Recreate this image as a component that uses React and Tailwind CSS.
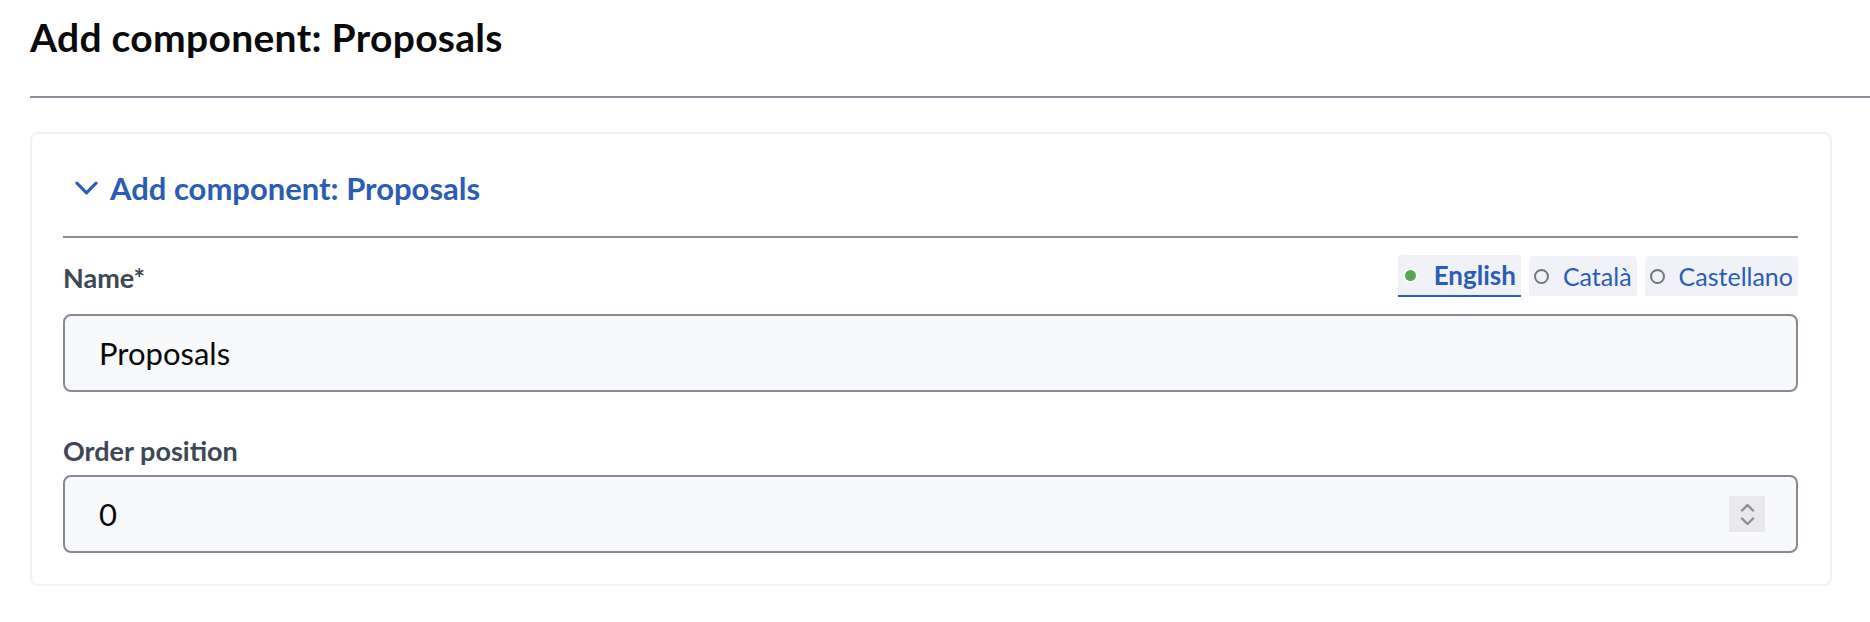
import React from "react";

function Chevron({ className }) {
  return (
    <svg className={className} viewBox="0 0 24 14" fill="none">
      <polyline points="2,2 12,12 22,2" stroke="currentColor" strokeWidth="3.2" strokeLinecap="round" strokeLinejoin="round" />
    </svg>
  );
}

function Tab({ label, active }) {
  return (
    <div
      className={
        "flex items-center pl-[5px] pr-[5px] bg-[#f0f2f7] rounded-t-[4px] " +
        (active ? "h-[42px] border-b-2 border-[#2b5cb6]" : "h-[40px] mt-[1px] self-start")
      }
    >
      {active ? (
        <span className="w-[15px] h-[15px] rounded-full bg-[#52a84d] border-2 border-white box-border" />
      ) : (
        <span className="w-[15px] h-[15px] rounded-full border-2 border-[#74767e] box-border" />
      )}
      <span
        className={
          (active ? "ml-[16px] font-bold text-[26px] " : "ml-[14px] font-normal text-[25px] ") + "leading-[28px] text-[#2b5cb6]"
        }
      >
        {label}
      </span>
    </div>
  );
}

export default function App() {
  return (
    <div className="bg-white min-h-[622px] pl-[30px] pt-[14px]" style={{ fontFamily: "Lato, 'Noto Sans', sans-serif" }}>
      <h1 className="text-[39px] leading-[46px] font-bold text-[#0a0a0a] tracking-[0.3px]">Add component: Proposals</h1>
      <div className="mt-[36px] h-[2px] bg-[#8a8d97]" />
      <div className="mt-[34px] mr-[38px] border-2 border-[#f1f2f6] rounded-[8px] pl-[31px] pr-[32px] pt-[36px] pb-[31px]">
        <div className="flex items-center h-[36px]">
          <Chevron className="ml-[12px] w-[23px] h-[14px] text-[#2b5cb6]" />
          <span className="ml-[12px] text-[31px] leading-[36px] font-bold text-[#2b5cb6]">Add component: Proposals</span>
        </div>
        <div className="mt-[30px] h-[2px] bg-[#8a8d97]" />
        <div className="mt-[17px] flex justify-between items-start">
          <label className="mt-[8px] text-[27px] leading-[30px] font-bold text-[#3d4757]">Name*</label>
          <div className="flex gap-[8px]">
            <Tab label="English" active />
            <Tab label="Català" />
            <Tab label="Castellano" />
          </div>
        </div>
        <div className="mt-[17px] h-[78px] border-2 border-[#878a94] rounded-[8px] bg-[#f8f9fb] flex items-center pl-[34px]">
          <span className="text-[31px] leading-[34px] text-[#0a0a0a]">Proposals</span>
        </div>
        <label className="block mt-[44px] text-[27px] leading-[30px] font-bold text-[#3d4757]">Order position</label>
        <div className="mt-[9px] h-[78px] border-2 border-[#878a94] rounded-[8px] bg-[#f8f9fb] flex items-center justify-between pl-[34px] pr-[31px]">
          <span className="text-[31px] leading-[34px] text-[#0a0a0a]">0</span>
          <div className="w-[36px] h-[36px] bg-[#e8e8ed] flex flex-col items-center justify-center gap-[5px]">
            <svg width="15" height="9" viewBox="0 0 15 9" fill="none">
              <polyline points="2,7.5 7.5,2 13,7.5" stroke="#8d8d99" strokeWidth="2.4" strokeLinecap="round" strokeLinejoin="round" />
            </svg>
            <svg width="15" height="9" viewBox="0 0 15 9" fill="none">
              <polyline points="2,1.5 7.5,7 13,1.5" stroke="#8d8d99" strokeWidth="2.4" strokeLinecap="round" strokeLinejoin="round" />
            </svg>
          </div>
        </div>
      </div>
    </div>
  );
}
